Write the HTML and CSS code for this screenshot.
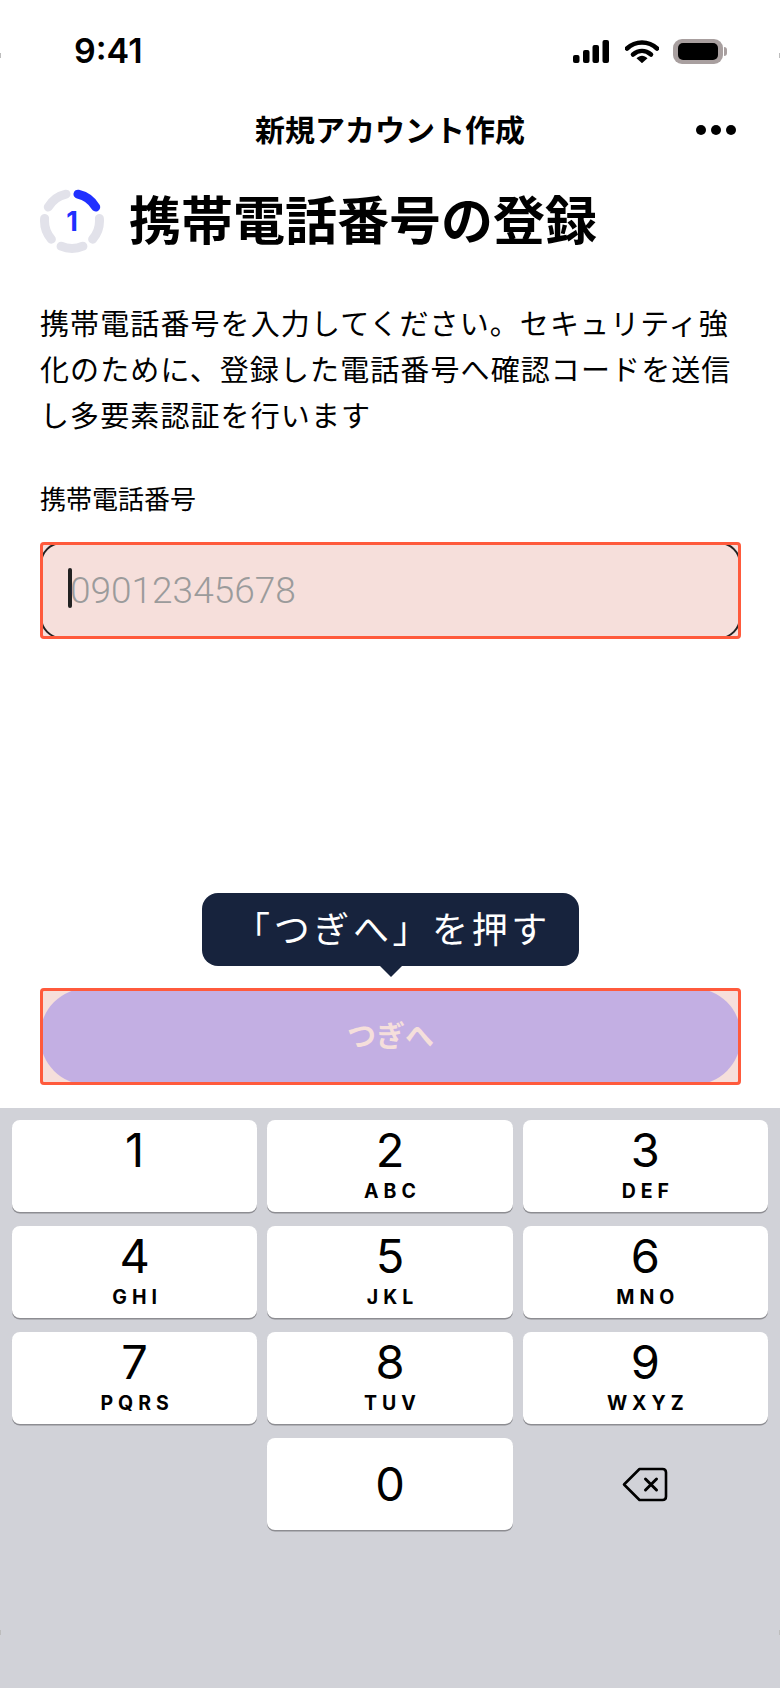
FILE: index.html
```html
<!DOCTYPE html>
<html lang="ja">
  <head>
    <meta charset="utf-8">
    <title>新規アカウント作成</title>
    <link rel="stylesheet" href="styles.css">
  </head>
  <body>
    <div class="screen">
      <i class="tick tick-tl"></i>
      <i class="tick tick-tr"></i>
      <i class="tick tick-bl"></i>
      <i class="tick tick-br"></i>

      <div class="status-bar">
        <span class="clock">9:41</span>
        <div class="status-icons">
          <svg class="signal" width="36" height="23" viewBox="0 0 36 23">
            <rect x="0" y="15" width="6.5" height="8" rx="2"/>
            <rect x="10" y="10" width="6.5" height="13" rx="2"/>
            <rect x="19.5" y="5" width="6.5" height="18" rx="2"/>
            <rect x="29.5" y="0" width="6.5" height="23" rx="2"/>
          </svg>
          <svg class="wifi" width="34" height="24" viewBox="0 0 34 24">
            <path d="M2 9.5C10.5 1.5 23.5 1.5 32 9.5" fill="none" stroke="#000" stroke-width="4.6" stroke-linecap="round"/>
            <path d="M8 15.5C13.5 10.8 20.5 10.8 26 15.5" fill="none" stroke="#000" stroke-width="4.6" stroke-linecap="round"/>
            <path d="M11.5 19.2C14.8 15.8 19.2 15.8 22.5 19.2L17 24.2Z"/>
          </svg>
          <div class="battery"><div class="battery-level"></div></div>
          <div class="battery-tip"></div>
        </div>
      </div>

      <div class="nav-bar">
        <span class="nav-title">新規アカウント作成</span>
        <div class="nav-more"><i></i><i></i><i></i></div>
      </div>

      <div class="content">
        <div class="heading">
          <div class="step">
            <svg width="64" height="64" viewBox="0 0 64 64">
              <g class="ring" fill="none" stroke-width="9" stroke-linecap="round" transform="rotate(-90 32 32)">
                <circle class="ring-on" cx="32" cy="32" r="27.5" pathLength="100" stroke-dasharray="13 87" stroke-dashoffset="-3.5"/>
                <circle cx="32" cy="32" r="27.5" pathLength="100" stroke-dasharray="13 87" stroke-dashoffset="-23.5"/>
                <circle cx="32" cy="32" r="27.5" pathLength="100" stroke-dasharray="13 87" stroke-dashoffset="-43.5"/>
                <circle cx="32" cy="32" r="27.5" pathLength="100" stroke-dasharray="13 87" stroke-dashoffset="-63.5"/>
                <circle cx="32" cy="32" r="27.5" pathLength="100" stroke-dasharray="13 87" stroke-dashoffset="-83.5"/>
              </g>
            </svg>
            <span class="step-num">1</span>
          </div>
          <h1>携帯電話番号の登録</h1>
        </div>

        <p class="lead">携帯電話番号を入力してください。セキュリティ強化のために、登録した電話番号へ確認コードを送信し多要素認証を行います</p>

        <div class="field-label">携帯電話番号</div>
        <div class="mark">
          <div class="field">
            <span class="caret"></span>
            <span class="placeholder">09012345678</span>
          </div>
        </div>

        <div class="actions">
          <div class="tooltip">「つぎへ」を押す</div>
          <div class="mark">
            <button class="next-btn">つぎへ</button>
          </div>
        </div>
      </div>

      <div class="keyboard">
        <div class="key"><span class="digit">1</span><span class="letters"></span></div>
        <div class="key"><span class="digit">2</span><span class="letters">ABC</span></div>
        <div class="key"><span class="digit">3</span><span class="letters">DEF</span></div>
        <div class="key"><span class="digit">4</span><span class="letters">GHI</span></div>
        <div class="key"><span class="digit">5</span><span class="letters">JKL</span></div>
        <div class="key"><span class="digit">6</span><span class="letters">MNO</span></div>
        <div class="key"><span class="digit">7</span><span class="letters">PQRS</span></div>
        <div class="key"><span class="digit">8</span><span class="letters">TUV</span></div>
        <div class="key"><span class="digit">9</span><span class="letters">WXYZ</span></div>
        <div class="key-empty"></div>
        <div class="key key-zero"><span class="digit">0</span></div>
        <div class="key-delete">
          <svg width="46" height="35" viewBox="0 0 46 35" fill="none" stroke="#000" stroke-width="2.6" stroke-linejoin="round" stroke-linecap="round">
            <path d="M17.5 2H40.5C42.7 2 44 3.3 44 5.5V29.5C44 31.7 42.7 33 40.5 33H17.5L2 17.5Z"/>
            <path d="M23.5 12L34.5 23M34.5 12L23.5 23" stroke-width="3"/>
          </svg>
        </div>
      </div>
    </div>
  </body>
</html>
```

FILE: styles.css
```css
* {
  box-sizing: border-box;
}

html, body {
  margin: 0;
  padding: 0;
  background: #fff;
  color: #000;
  font-family: "Noto Sans CJK JP", "Inter", sans-serif;
}

.screen {
  position: relative;
  display: flex;
  flex-direction: column;
  width: 780px;
  height: 1688px;
  overflow: hidden;
}

/* small marks on the screen edges */
.tick {
  position: absolute;
  width: 1px;
  height: 5px;
  background: #bdbdbd;
}

.tick-tl {
  left: 0;
  top: 53px;
}

.tick-tr {
  right: 0;
  top: 53px;
}

.tick-bl {
  left: 0;
  top: 1630px;
}

.tick-br {
  right: 0;
  top: 1630px;
}

.status-bar {
  display: flex;
  justify-content: space-between;
  align-items: center;
  height: 102px;
  padding: 0 53px 0 74px;
}

.clock {
  font: 600 34px/1 "Inter", sans-serif;
}

.status-icons {
  display: flex;
  align-items: center;
}

.signal {
  margin-right: 16px;
}

.wifi {
  margin-right: 14px;
}

.battery {
  width: 50px;
  height: 25px;
  padding: 4px 5px;
  border-radius: 9px;
  background: #a89f9f;
}

.battery-level {
  height: 100%;
  border-radius: 5px;
  background: #000;
}

.battery-tip {
  width: 3px;
  height: 9px;
  margin-left: 1px;
  border-radius: 0 3px 3px 0;
  background: #a89f9f;
}

.nav-bar {
  position: relative;
  display: flex;
  justify-content: center;
  align-items: center;
  height: 56px;
}

.nav-title {
  margin-bottom: 4px;
  font-size: 30px;
  font-weight: 700;
  line-height: 1;
}

.nav-more {
  position: absolute;
  right: 44px;
  top: 23px;
  display: flex;
  gap: 5px;
}

.nav-more i {
  display: block;
  width: 10px;
  height: 10px;
  border-radius: 50%;
  background: #000;
}

.content {
  flex: 1;
  display: flex;
  flex-direction: column;
  padding: 31px 39px 23px 40px;
}

.heading {
  display: flex;
  align-items: center;
  gap: 25px;
}

.step {
  position: relative;
  width: 64px;
  height: 64px;
}

.step svg {
  display: block;
}

.ring {
  stroke: #e2e2ea;
}

.ring-on {
  stroke: #2030ff;
}

.step-num {
  position: absolute;
  inset: 0;
  display: flex;
  justify-content: center;
  align-items: center;
  color: #2030ff;
  font: 700 27px/1 "Inter", sans-serif;
}

h1 {
  margin: 0 0 6px;
  font-size: 52px;
  font-weight: 700;
  line-height: 58px;
}

.lead {
  margin: 46px 0 0;
  font-size: 29px;
  letter-spacing: 1.1px;
  line-height: 46px;
}

.field-label {
  margin-top: 42px;
  font-size: 26px;
  line-height: 38px;
}

.mark {
  position: relative;
  background: #f6dfdb;
  border-radius: 4px;
}

.mark::after {
  content: "";
  position: absolute;
  inset: 0;
  border: 3px solid #ff5a3c;
  border-radius: 4px;
  pointer-events: none;
}

.field {
  display: flex;
  align-items: center;
  height: 97px;
  padding-left: 26px;
  border: 2px solid #222;
  border-radius: 22px;
}

.field-label + .mark {
  margin-top: 25px;
}

.caret {
  width: 4px;
  height: 40px;
  margin: 0 -2px 5px 0;
  border-radius: 2px;
  background: #222;
}

.placeholder {
  color: #9b9b9b;
  font: 300 37px/1 "Roboto", sans-serif;
}

.actions {
  margin-top: auto;
}

.tooltip {
  position: relative;
  width: 377px;
  height: 73px;
  margin: 0 auto 22px;
  padding-left: 4px;
  border-radius: 16px;
  background: #17233d;
  color: #fff;
  font-size: 36px;
  letter-spacing: 3.6px;
  line-height: 68px;
  text-align: center;
  white-space: nowrap;
}

.tooltip::after {
  content: "";
  position: absolute;
  left: 50%;
  bottom: -11px;
  margin-left: -11px;
  border-top: 11px solid #17233d;
  border-left: 11px solid transparent;
  border-right: 11px solid transparent;
}

.next-btn {
  display: block;
  width: 100%;
  height: 97px;
  padding: 0 0 6px;
  border: 0;
  border-radius: 48px;
  background: #c3afe3;
  color: #f5dfdb;
  font-family: inherit;
  font-size: 29px;
  font-weight: 700;
}

.keyboard {
  display: grid;
  grid-template-columns: repeat(3, 1fr);
  grid-auto-rows: 92px;
  row-gap: 14px;
  column-gap: 10px;
  height: 580px;
  padding: 12px 12px 0;
  background: #d1d2d8;
}

.key {
  display: flex;
  flex-direction: column;
  align-items: center;
  border-radius: 8px;
  background: #fff;
  box-shadow: 0 1.5px 0 #8d8d92;
  font-family: "Inter", sans-serif;
}

.digit {
  margin-top: 3px;
  font-size: 47px;
  line-height: 54px;
}

.letters {
  margin-top: 2px;
  padding-left: 5px;
  font-size: 19.5px;
  font-weight: 700;
  letter-spacing: 5px;
  line-height: 24px;
}

.key-zero {
  justify-content: center;
}

.key-zero .digit {
  margin-top: 0;
}

.key-delete {
  display: flex;
  justify-content: center;
  align-items: center;
}
```
